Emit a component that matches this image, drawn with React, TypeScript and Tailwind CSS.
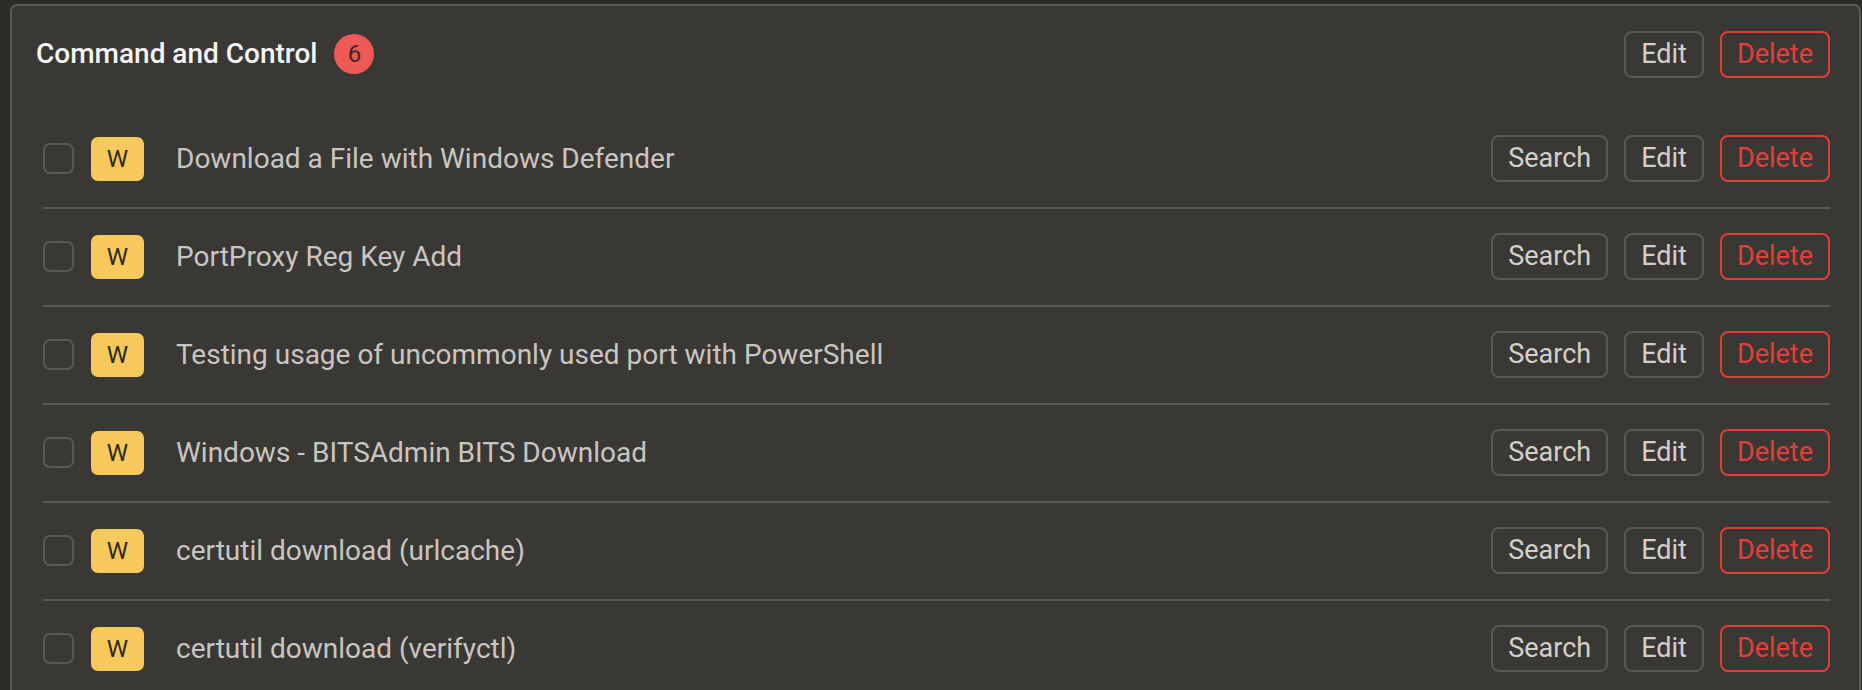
import React from "react";

const items = [
  "Download a File with Windows Defender",
  "PortProxy Reg Key Add",
  "Testing usage of uncommonly used port with PowerShell",
  "Windows - BITSAdmin BITS Download",
  "certutil download (urlcache)",
  "certutil download (verifyctl)",
];

function Btn({ children, danger }: { children: React.ReactNode; danger?: boolean }) {
  return (
    <button
      className={
        danger
          ? "h-[47px] px-[15px] flex items-center rounded-[8px] border-2 border-[#e23b38] text-[#e53d3a] text-[27px] leading-none"
          : "h-[47px] px-[15px] flex items-center rounded-[8px] border-2 border-[#5a5855] text-[#d3d0cc] text-[27px] leading-none"
      }
    >
      {children}
    </button>
  );
}

export default function App() {
  return (
    <div
      className="w-[1862px] h-[690px] overflow-hidden bg-[#2c2b28] pl-[10px] pt-[4px]"
      style={{ fontFamily: "Roboto, 'Noto Sans', sans-serif" }}
    >
      <div className="h-[720px] w-[1851px] rounded-[7px] border-2 border-[#5b5956] bg-[#3a3834] pl-[24px] pr-[29px] pt-[25px]">
        <div className="flex h-[46px] items-center">
          <div className="text-[28px] font-medium text-[#f4f4f4] leading-none">Command and Control</div>
          <div className="ml-[17px] flex h-[40px] w-[40px] items-center justify-center rounded-full bg-[#ed5a56] text-[24px] text-[#3b2a29] leading-none">
            6
          </div>
          <div className="ml-auto flex gap-[16px]">
            <Btn>Edit</Btn>
            <Btn danger>Delete</Btn>
          </div>
        </div>
        <div className="ml-[7px] mt-[34px]">
          {items.map((t) => (
            <div key={t} className="flex items-center border-b-2 border-[#5b5956] pt-[24px] pb-[25px]">
              <div className="h-[31px] w-[31px] rounded-[7px] border-2 border-[#5a5855]" />
              <div className="ml-[17px] flex h-[44px] w-[53px] items-center justify-center rounded-[7px] bg-[#f6c95a] text-[24px] text-[#2d2b28] leading-none">
                W
              </div>
              <div className="ml-[32px] text-[28px] text-[#c9c6c2] leading-none">{t}</div>
              <div className="ml-auto flex gap-[16px]">
                <Btn>Search</Btn>
                <Btn>Edit</Btn>
                <Btn danger>Delete</Btn>
              </div>
            </div>
          ))}
        </div>
      </div>
    </div>
  );
}
